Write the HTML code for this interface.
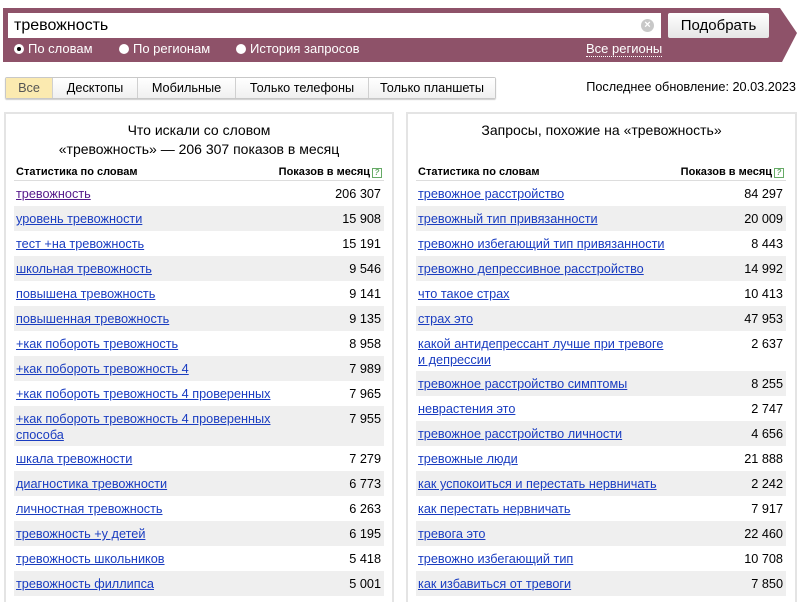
<!DOCTYPE html>
<html><head><meta charset="utf-8"><style>
*{margin:0;padding:0;box-sizing:border-box}
body{width:808px;height:595px;overflow:hidden;background:#fff;font-family:"Liberation Sans",Arial,sans-serif;font-size:13px;color:#000;position:relative}
.bar{position:absolute;left:3px;top:8px;width:794px;height:54px;background:#8e5269;clip-path:polygon(0 0,777px 0,794px 25px,779px 54px,0 54px)}
.inp{position:absolute;left:8px;top:13px;width:653px;height:25px;background:#fff;font-size:16px;padding:3px 6px;line-height:19px}
.clr{position:absolute;left:641px;top:19px;width:13px;height:13px;border-radius:50%;background:#c8c8c8;color:#fff;font-size:11px;line-height:13px;text-align:center;font-weight:bold}
.btn{position:absolute;left:668px;top:13px;width:101px;height:25px;background:linear-gradient(#fff,#e6e6e6);border-radius:2px;font-size:15px;text-align:center;line-height:25px;color:#000}
.rad{position:absolute;top:42px;color:#fff;font-size:13px;line-height:14px}
.rad i{display:inline-block;width:10px;height:10px;border-radius:50%;background:#fff;margin-right:4px;vertical-align:-1px;position:relative}
.rad i.on:after{content:"";position:absolute;left:3px;top:3px;width:4px;height:4px;border-radius:50%;background:#000}
.reg{position:absolute;left:586px;top:42px;color:#fff;font-size:13px;border-bottom:1px dotted #fff;line-height:14px}
.tabs{position:absolute;left:5px;top:77px;height:22px;display:flex;border:1px solid #c8c8c8;border-radius:2px;box-shadow:0 1px 1px #ccc;font-size:12.7px}
.tabs div{height:20px;line-height:20px;text-align:center;border-left:1px solid #d0d0d0;background:linear-gradient(#fff,#f0f0f0)}
.tabs div:first-child{border-left:none;background:#fbeab0;color:#555}
.upd{position:absolute;right:12px;top:80px;font-size:12.7px}
.panel{position:absolute;top:112px;height:490px;border:2px solid #e4e4e4;border-bottom:none}
.ttl{position:absolute;top:7px;left:0;right:0;text-align:center;font-size:14px;line-height:19px}
.hd{position:absolute;top:51px;font-size:11px;font-weight:bold;height:18px;line-height:18px;border-bottom:1px solid #ddd;padding-left:2px}
.hd span{position:absolute;right:2px}
.q{display:inline-block;width:10px;height:10px;border:1px solid #6a6;font-size:8px;line-height:8px;text-align:center;color:#6a6;margin-left:2px;vertical-align:0}
.row{position:absolute;height:25px;line-height:16px;padding:5px 2px 0 2px;font-size:12.7px}
.row.g{background:#efefef}
.row a{color:#1a3dc1;text-decoration:underline}
.row a.v{color:#551a8b}
.row b{position:absolute;right:3px;top:5px;font-weight:normal;color:#000}
</style></head><body>
<div class="bar"></div>
<div class="inp">тревожность</div>
<div class="clr">×</div>
<div class="btn">Подобрать</div>
<div class="rad" style="left:14px"><i class="on"></i>По словам</div>
<div class="rad" style="left:119px"><i></i>По регионам</div>
<div class="rad" style="left:236px"><i></i>История запросов</div>
<div class="reg">Все регионы</div>
<div class="tabs"><div style="width:46px">Все</div><div style="width:85px">Десктопы</div><div style="width:98px">Мобильные</div><div style="width:133px">Только телефоны</div><div style="width:127px">Только планшеты</div></div>
<div class="upd">Последнее обновление: 20.03.2023</div>

<div class="panel" style="left:4px;width:390px">
<div class="ttl">Что искали со словом<br>«тревожность» — 206 307 показов в месяц</div>
</div>
<div class="panel" style="left:406px;width:391px">
<div class="ttl">Запросы, похожие на «тревожность»</div>
</div>
<div class="hd" style="left:14px;width:370px;top:163px">Статистика по словам<span>Показов в месяц<i class="q">?</i></span></div>
<div class="hd" style="left:416px;width:370px;top:163px">Статистика по словам<span>Показов в месяц<i class="q">?</i></span></div>

<div style="position:absolute;left:14px;top:181px;width:370px">
<div class="row" style="top:0;width:370px"><a class="v">тревожность</a><b>206 307</b></div>
<div class="row g" style="top:25px;width:370px"><a>уровень тревожности</a><b>15 908</b></div>
<div class="row" style="top:50px;width:370px"><a>тест +на тревожность</a><b>15 191</b></div>
<div class="row g" style="top:75px;width:370px"><a>школьная тревожность</a><b>9 546</b></div>
<div class="row" style="top:100px;width:370px"><a>повышена тревожность</a><b>9 141</b></div>
<div class="row g" style="top:125px;width:370px"><a>повышенная тревожность</a><b>9 135</b></div>
<div class="row" style="top:150px;width:370px"><a>+как побороть тревожность</a><b>8 958</b></div>
<div class="row g" style="top:175px;width:370px"><a>+как побороть тревожность 4</a><b>7 989</b></div>
<div class="row" style="top:200px;width:370px"><a>+как побороть тревожность 4 проверенных</a><b>7 965</b></div>
<div class="row g" style="top:225px;width:370px;height:40px"><a>+как побороть тревожность 4 проверенных<br>способа</a><b>7 955</b></div>
<div class="row" style="top:265px;width:370px"><a>шкала тревожности</a><b>7 279</b></div>
<div class="row g" style="top:290px;width:370px"><a>диагностика тревожности</a><b>6 773</b></div>
<div class="row" style="top:315px;width:370px"><a>личностная тревожность</a><b>6 263</b></div>
<div class="row g" style="top:340px;width:370px"><a>тревожность +у детей</a><b>6 195</b></div>
<div class="row" style="top:365px;width:370px"><a>тревожность школьников</a><b>5 418</b></div>
<div class="row g" style="top:390px;width:370px"><a>тревожность филлипса</a><b>5 001</b></div>
</div>

<div style="position:absolute;left:416px;top:181px;width:370px">
<div class="row" style="top:0;width:370px"><a>тревожное расстройство</a><b>84 297</b></div>
<div class="row g" style="top:25px;width:370px"><a>тревожный тип привязанности</a><b>20 009</b></div>
<div class="row" style="top:50px;width:370px"><a>тревожно избегающий тип привязанности</a><b>8 443</b></div>
<div class="row g" style="top:75px;width:370px"><a>тревожно депрессивное расстройство</a><b>14 992</b></div>
<div class="row" style="top:100px;width:370px"><a>что такое страх</a><b>10 413</b></div>
<div class="row g" style="top:125px;width:370px"><a>страх это</a><b>47 953</b></div>
<div class="row" style="top:150px;width:370px;height:40px"><a>какой антидепрессант лучше при тревоге<br>и депрессии</a><b>2 637</b></div>
<div class="row g" style="top:190px;width:370px"><a>тревожное расстройство симптомы</a><b>8 255</b></div>
<div class="row" style="top:215px;width:370px"><a>неврастения это</a><b>2 747</b></div>
<div class="row g" style="top:240px;width:370px"><a>тревожное расстройство личности</a><b>4 656</b></div>
<div class="row" style="top:265px;width:370px"><a>тревожные люди</a><b>21 888</b></div>
<div class="row g" style="top:290px;width:370px"><a>как успокоиться и перестать нервничать</a><b>2 242</b></div>
<div class="row" style="top:315px;width:370px"><a>как перестать нервничать</a><b>7 917</b></div>
<div class="row g" style="top:340px;width:370px"><a>тревога это</a><b>22 460</b></div>
<div class="row" style="top:365px;width:370px"><a>тревожно избегающий тип</a><b>10 708</b></div>
<div class="row g" style="top:390px;width:370px"><a>как избавиться от тревоги</a><b>7 850</b></div>
</div>
</body></html>
